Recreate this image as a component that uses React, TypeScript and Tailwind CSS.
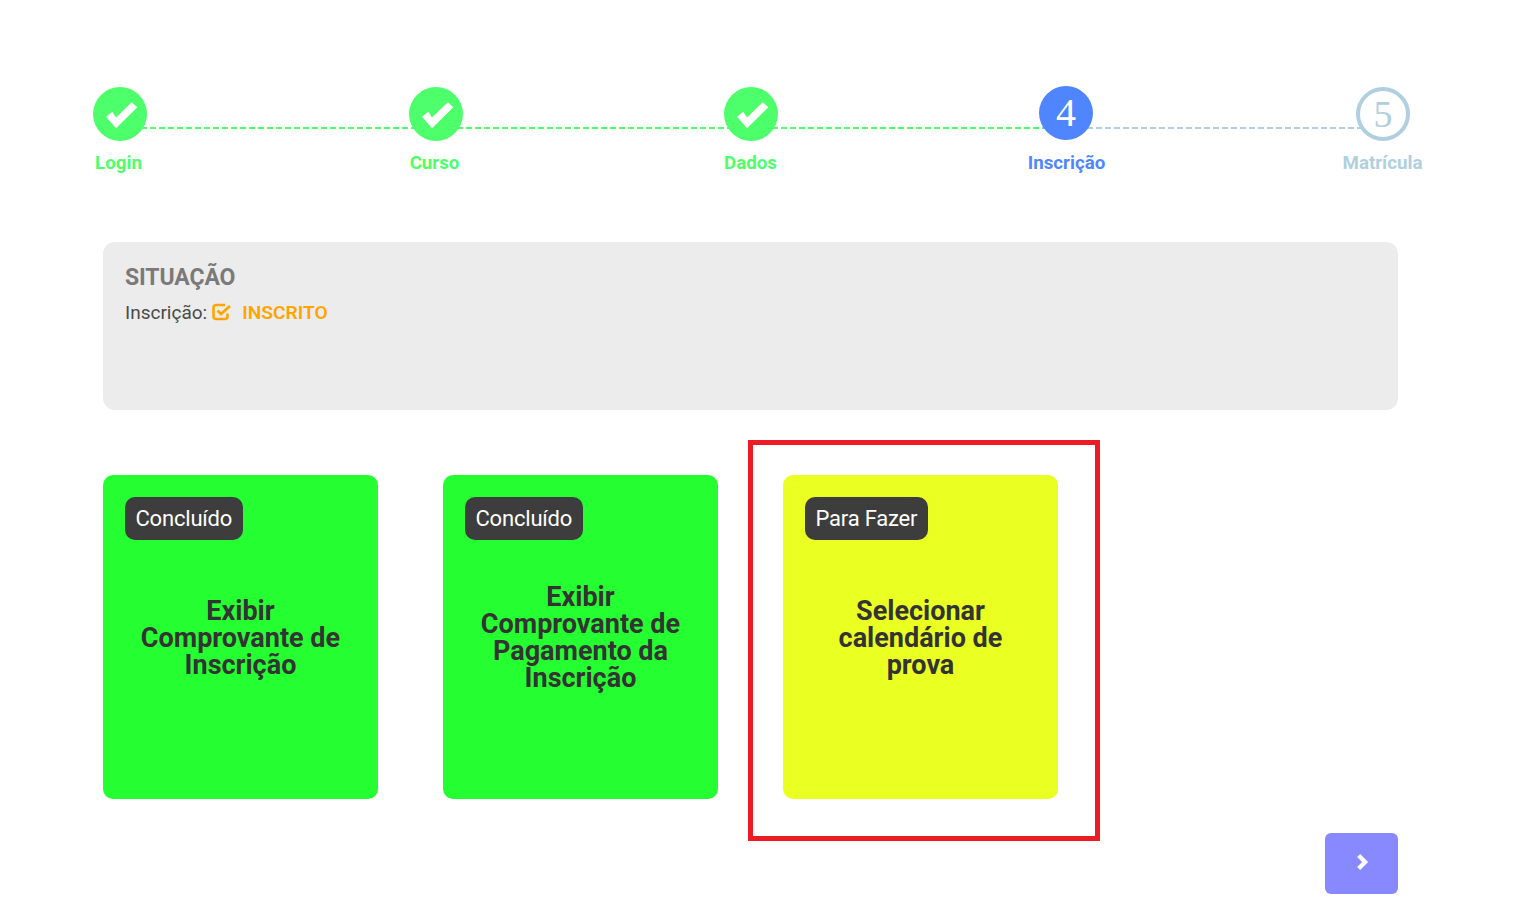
import React from "react";

const steps = [
  { label: "Login", color: "text-[#4dff6a]" },
  { label: "Curso", color: "text-[#4dff6a]" },
  { label: "Dados", color: "text-[#4dff6a]" },
  { label: "Inscrição", color: "text-[#4f86ff]" },
  { label: "Matrícula", color: "text-[#b0cfdf]" },
];

function Done() {
  return (
    <div className="w-[54px] h-[54px] shrink-0 rounded-full bg-[#4dff6a] relative z-10">
      <svg viewBox="0 0 54 54" className="w-[54px] h-[54px]">
        <polygon points="13,29.7 19.3,24.7 23,30.5 38.7,15.3 44.3,20.3 23,41.3" fill="#ffffff" />
      </svg>
    </div>
  );
}

function Line({ bg, width }: { bg: string; width: string }) {
  return <div className={`${width} shrink-0 -mx-[6px] mt-[40px] h-[2px] ${bg}`} />;
}

function Card({ bg, badge, lines, top }: { bg: string; badge: string; lines: string[]; top: string }) {
  return (
    <div className={`w-[275px] h-[324px] rounded-[10px] ${bg} relative flex items-center justify-center`}>
      <span className="absolute left-[21.5px] top-[22px] h-[43px] px-[11px] rounded-[10px] bg-[#3d3d3d] text-white text-[22px] leading-[43px] tracking-[-0.2px]">
        {badge}
      </span>
      <div className={`text-[27px] leading-[27px] font-bold text-[#333333] text-center ${top}`}>
        {lines.map((l) => (
          <div key={l}>{l}</div>
        ))}
      </div>
    </div>
  );
}

export default function App() {
  const green = "bg-[repeating-linear-gradient(90deg,#4dff6a_0_6px,transparent_6px_9px)]";
  const pale = "bg-[repeating-linear-gradient(90deg,#b0cfdf_0_6px,transparent_6px_9px)]";
  return (
    <div className="w-[1539px] h-[923px] bg-white overflow-hidden font-['Roboto',sans-serif] pt-[87px]">
      <div className="flex pl-[93px] h-[54px]">
        <Done />
        <Line bg={green} width="w-[274px]" />
        <Done />
        <Line bg={green} width="w-[273px]" />
        <Done />
        <Line bg={green} width="w-[273px]" />
        <div className="w-[54px] h-[54px] shrink-0 -mt-px rounded-full bg-[#4f86ff] flex items-center justify-center text-white text-[40px] font-['Liberation_Serif',serif] relative z-10">
          4
        </div>
        <Line bg={pale} width="w-[275px]" />
        <div className="w-[54px] h-[54px] shrink-0 rounded-full bg-white border-4 border-[#b0cfdf] flex items-center justify-center text-[#b0cfdf] text-[38px] font-['Liberation_Serif',serif] relative z-10">
          5
        </div>
      </div>
      <div className="flex justify-between pl-[68.5px] pr-[106.5px] mt-[10px]">
        {steps.map((s) => (
          <div key={s.label} className={`w-[100px] text-center text-[18.72px] leading-[24px] font-bold ${s.color}`}>
            {s.label}
          </div>
        ))}
      </div>

      <div className="ml-[103px] w-[1295px] h-[168px] mt-[67px] rounded-[12px] bg-[#ececec] px-[22px] pt-[22px]">
        <div className="text-[23px] leading-[28px] font-bold tracking-[-0.1px] text-[#7a7a7a]">SITUAÇÃO</div>
        <div className="flex items-center mt-[9px] h-[24px] text-[19px] text-[#4a4a4a]">
          <span>Inscrição:</span>
          <svg viewBox="0 0 20 18" className="ml-[5px] w-[20px] h-[18px] -mt-[3px]" fill="none">
            <path d="M15.5 10.5V13.5C15.5 15 14.5 16 13 16H4C2.5 16 1.5 15 1.5 13.5V4.5C1.5 3 2.5 2 4 2H13" stroke="#ffa500" strokeWidth="2.6" />
            <path d="M5.5 7.5L9 11L18 3" stroke="#ffa500" strokeWidth="2.8" />
          </svg>
          <span className="ml-[10px] font-semibold text-[19.2px] text-[#ffa500]">INSCRITO</span>
        </div>
      </div>

      <div className="ml-[103px] mt-[65px] flex gap-[65px]">
        <Card bg="bg-[#25ff31]" badge="Concluído" lines={["Exibir", "Comprovante de", "Inscrição"]} top="mt-[3px]" />
        <Card bg="bg-[#25ff31]" badge="Concluído" lines={["Exibir", "Comprovante de", "Pagamento da", "Inscrição"]} top="mt-[2px]" />
        <div className="relative">
          <Card bg="bg-[#eaff22]" badge="Para Fazer" lines={["Selecionar", "calendário de", "prova"]} top="mt-[3px]" />
          <div className="absolute left-[-35px] top-[-35px] w-[352px] h-[401px] border-[5px] border-[#ed1c24]" />
        </div>
      </div>

      <div className="ml-[1325px] mt-[34px] w-[73px] h-[61px] rounded-[6px] bg-[#8888ff] flex items-center justify-center">
        <svg viewBox="0 0 14 16" className="w-[15px] h-[18px] -mt-[3px] ml-[4px]" fill="none">
          <path d="M2.5 2L8.5 8L2.5 14" stroke="#ffffff" strokeWidth="4" />
        </svg>
      </div>
    </div>
  );
}
